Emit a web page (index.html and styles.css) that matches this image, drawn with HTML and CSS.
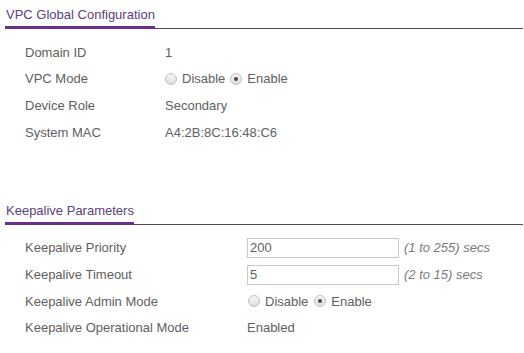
FILE: index.html
```html
<!DOCTYPE html>
<html lang="en">

<head>
    <meta charset="UTF-8">
    <title>VPC Global Configuration</title>
    <link rel="stylesheet" href="styles.css">
</head>

<body>
    <div class="section">
        <div class="section-head"><span class="section-title">VPC Global Configuration</span></div>
        <div class="form-grid narrow">
            <div class="label">Domain ID</div>
            <div class="value">1</div>

            <div class="label">VPC Mode</div>
            <div class="value radios">
                <label><input type="radio" name="vpcMode"> Disable</label>
                <label><input type="radio" name="vpcMode" checked> Enable</label>
            </div>

            <div class="label">Device Role</div>
            <div class="value">Secondary</div>

            <div class="label">System MAC</div>
            <div class="value">A4:2B:8C:16:48:C6</div>
        </div>
    </div>

    <div class="section">
        <div class="section-head"><span class="section-title">Keepalive Parameters</span></div>
        <div class="form-grid wide">
            <div class="label">Keepalive Priority</div>
            <div class="value">
                <input type="text" class="field" value="200">
                <span class="hint">(1 to 255) secs</span>
            </div>

            <div class="label">Keepalive Timeout</div>
            <div class="value">
                <input type="text" class="field" value="5">
                <span class="hint">(2 to 15) secs</span>
            </div>

            <div class="label">Keepalive Admin Mode</div>
            <div class="value radios">
                <label><input type="radio" name="adminMode"> Disable</label>
                <label><input type="radio" name="adminMode" checked> Enable</label>
            </div>

            <div class="label">Keepalive Operational Mode</div>
            <div class="value">Enabled</div>
        </div>
    </div>
</body>

</html>
```

FILE: styles.css
```css
:root {
    --text-color: #606060;
    --title-color: #5c4080;
    --accent: #6b2e8e;
    --rule: #54445f;
    --hint-color: #7a7a7a;
}

body {
    margin: 0;
    font-family: "Liberation Sans", Arial, sans-serif;
    font-size: 13px;
    color: var(--text-color);
    background: #fff;
}

.section + .section {
    margin-top: 50px;
}

.section-head {
    display: flex;
    margin: 0 1px 0 5px;
    padding-top: 7px;
    border-bottom: 1px solid var(--rule);
}

.section-title {
    line-height: 16px;
    padding: 0 0 3px 1px;
    margin-bottom: -1px;
    border-bottom: 3px solid var(--accent);
    color: var(--title-color);
}

.form-grid {
    display: grid;
    grid-auto-rows: 26.67px;
    align-items: center;
    padding: 10px 0 0 25px;
}

.form-grid.narrow {
    grid-template-columns: 140px auto;
}

.form-grid.wide {
    grid-template-columns: 222px auto;
}

.value {
    display: flex;
    align-items: center;
}

.radios label {
    display: flex;
    align-items: center;
    margin-right: 5px;
}

input[type="radio"] {
    appearance: none;
    -webkit-appearance: none;
    width: 12px;
    height: 12px;
    margin: 0 5px 0 0;
    border: 1px solid #c0c0c0;
    border-radius: 50%;
    background: linear-gradient(#f6f6f6, #dedede);
    display: grid;
    place-items: center;
}

input[type="radio"]:checked::after {
    content: "";
    width: 4px;
    height: 4px;
    border-radius: 50%;
    background: #4a4a4a;
}

.wide input[type="radio"] {
    margin-left: 1px;
}

.field {
    box-sizing: border-box;
    width: 152px;
    height: 20px;
    margin: 0;
    padding: 0 2px;
    border: 1px solid #c8c8c8;
    font-family: inherit;
    font-size: 13px;
    color: var(--text-color);
}

.hint {
    margin-left: 5px;
    font-style: italic;
    color: var(--hint-color);
}
```
